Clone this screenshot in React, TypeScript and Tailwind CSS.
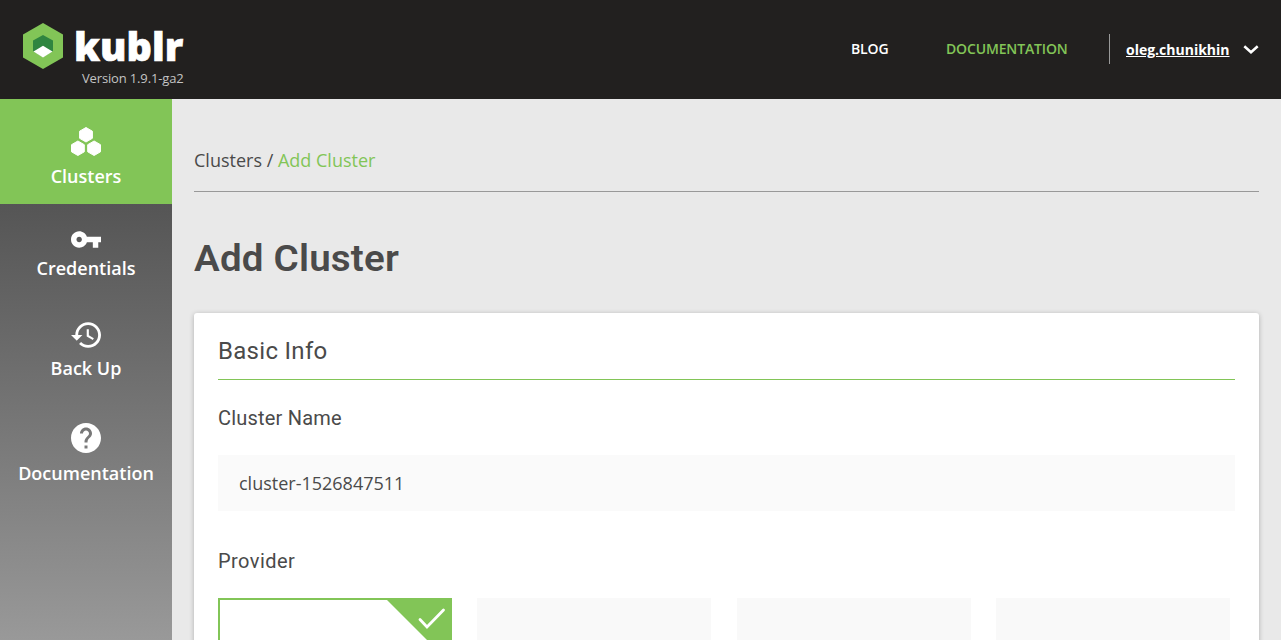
import React from "react";

const sans = "font-['Open_Sans',sans-serif]";
const display = "font-['Roboto',sans-serif]";

function Logo() {
  return (
    <div className="flex w-[190px] flex-col pl-[23px] pt-[23px]">
      <div className="flex h-[46px]">
        <svg width="40" height="46" viewBox="0 0 40 46" className="shrink-0">
          <path d="M20 0 40 11.5v23L20 46 0 34.500v-23z" fill="#82c557" />
          <path d="M20 12 30 17.500v10.500L20 34 10 28V17.500z" fill="#2f8540" />
          <path d="M20 22.800 29.500 28.500 20 34.500 10.500 28.500z" fill="#fff" />
        </svg>
        <span className="ml-[11px] text-[39.5px] leading-[46px] font-extrabold text-white [-webkit-text-stroke:0.7px_white]">kublr</span>
      </div>
      <span className="ml-[59px] mt-px whitespace-nowrap text-[13px] leading-4 tracking-[-0.15px] text-[#c4c4c4]">Version 1.9.1-ga2</span>
    </div>
  );
}

function Header() {
  return (
    <header className="flex h-[99px] shrink-0 bg-[#22201f]">
      <Logo />
      <nav className="ml-auto flex h-[98px] items-center pr-[22px] text-[14px] font-semibold">
        <a className="w-[95px] pb-0.5 tracking-[-0.15px] text-white">BLOG</a>
        <a className="w-[163px] pb-0.5 tracking-[-0.15px] text-[#82c557]">DOCUMENTATION</a>
        <div className="flex h-[30px] w-[150px] items-center border-l border-[#999] pl-4">
          <span className="text-[14px] font-bold text-white underline">oleg.chunikhin</span>
          <svg width="16" height="9" viewBox="0 0 16 9" className="ml-auto" fill="none" stroke="#fff" strokeWidth="2.500">
            <path d="m1.300 1.300 6.700 6 6.700-6" />
          </svg>
        </div>
      </nav>
    </header>
  );
}

function ClustersIcon() {
  return (
    <svg width="30" height="29" viewBox="0 0 30 29" fill="#fff" stroke="#fff" strokeWidth="1" strokeLinejoin="round">
      <path d="m15 .5 6.400 3.700v7.100L15 15l-6.400-3.700V4.200z" />
      <path d="m6.900 14 6.400 3.700v7.100l-6.400 3.700-6.400-3.700v-7.100z" />
      <path d="m23.100 14 6.400 3.700v7.100l-6.400 3.700-6.400-3.700v-7.100z" />
    </svg>
  );
}

function KeyIcon() {
  return (
    <svg width="30" height="17" viewBox="1 6 22 12" fill="#fff">
      <path d="M12.650 10C11.830 7.670 9.610 6 7 6c-3.310 0-6 2.690-6 6s2.690 6 6 6c2.610 0 4.830-1.670 5.650-4H17v4h4v-4h2v-4H12.650zM7 14c-1.100 0-2-.9-2-2s.9-2 2-2 2 .9 2 2-.9 2-2 2z" />
    </svg>
  );
}

function HistoryIcon() {
  return (
    <svg width="30" height="26" viewBox="1 3 21 18" fill="#fff">
      <path d="M13 3c-4.970 0-9 4.030-9 9H1l3.890 3.890.07.14L9 12H6c0-3.870 3.130-7 7-7s7 3.130 7 7-3.130 7-7 7c-1.930 0-3.680-.79-4.940-2.060l-1.420 1.420C8.270 19.990 10.510 21 13 21c4.970 0 9-4.030 9-9s-4.030-9-9-9zm-1 5v5l4.280 2.540.72-1.210-3.500-2.080V8H12z" />
    </svg>
  );
}

function HelpIcon() {
  return (
    <svg width="30" height="30" viewBox="2 2 20 20" fill="#fff">
      <path d="M12 2C6.480 2 2 6.480 2 12s4.480 10 10 10 10-4.480 10-10S17.520 2 12 2zm1 17h-2v-2h2v2zm2.070-7.750-.9.920C13.450 12.900 13 13.500 13 15h-2v-.5c0-1.100.45-2.100 1.170-2.830l1.240-1.260c.37-.36.59-.86.59-1.410 0-1.100-.9-2-2-2s-2 .9-2 2H8c0-2.210 1.790-4 4-4s4 1.790 4 4c0 .88-.36 1.680-.93 2.250z" />
    </svg>
  );
}

function Sidebar() {
  const item = "flex flex-col items-center text-[18px] leading-6 font-semibold text-white";
  return (
    <aside className="flex w-[172px] shrink-0 flex-col bg-gradient-to-b from-[#464646] to-[#999]">
      <a className={`${item} h-[105px] bg-[#82c557] pt-7`}>
        <ClustersIcon />
        <span className="mt-2">Clusters</span>
      </a>
      <a className={`${item} h-[92px] pt-[27px]`}>
        <KeyIcon />
        <span className="mt-2">Credentials</span>
      </a>
      <a className={`${item} h-[102px] pt-[26px]`}>
        <HistoryIcon />
        <span className="mt-2">Back Up</span>
      </a>
      <a className={`${item} pt-[25px]`}>
        <HelpIcon />
        <span className="mt-2">Documentation</span>
      </a>
    </aside>
  );
}

function Providers() {
  return (
    <div className="mt-[23px] flex gap-[25.3px]">
      <div className="flex h-[120px] w-[234px] shrink-0 justify-end border-2 border-[#82c557] bg-white">
        <svg width="63" height="63" viewBox="0 0 63 63">
          <path d="M0 0h63v63z" fill="#82c557" />
          <path d="m33 19.500 7 7.500 16.500-17" fill="none" stroke="#fff" strokeWidth="2.800" strokeLinecap="round" />
        </svg>
      </div>
      <div className="h-[120px] w-[234px] shrink-0 bg-[#f9f9f9]" />
      <div className="h-[120px] w-[234px] shrink-0 bg-[#f9f9f9]" />
      <div className="h-[120px] w-[234px] shrink-0 bg-[#f9f9f9]" />
    </div>
  );
}

export default function App() {
  return (
    <div className={`flex h-[640px] w-full flex-col overflow-hidden bg-[#e9e9e9] text-[#4a4a4a] ${sans}`}>
      <Header />
      <div className="flex min-h-0 flex-1">
        <Sidebar />
        <main className="min-w-0 flex-1 overflow-hidden px-[22px]">
          <div className="h-[93px] border-b border-[#999] pt-[49px] text-[18px] leading-6">
            Clusters / <span className="text-[#82c557]">Add Cluster</span>
          </div>
          <h1 className={`w-fit origin-left scale-x-[1.07] pt-[43px] text-[36px] leading-[48px] font-semibold tracking-[0.2px] ${display}`}>Add Cluster</h1>
          <section className="mt-[30px] h-[500px] rounded-[3px] bg-white px-6 shadow-[0_1px_5px_rgba(0,0,0,0.25)]">
            <h2 className={`h-[67px] border-b border-[#82c557] pt-[22px] text-[24px] leading-8 tracking-[0.3px] ${display}`}>Basic Info</h2>
            <h3 className={`pt-[24px] text-[20px] leading-7 tracking-[0.2px] ${display}`}>Cluster Name</h3>
            <div className="mt-[23px] flex h-14 items-center bg-[#fafafa] pl-[21px] text-[18px]">cluster-1526847511</div>
            <h3 className={`pt-[36px] text-[20px] leading-7 tracking-[0.45px] ${display}`}>Provider</h3>
            <Providers />
          </section>
        </main>
      </div>
    </div>
  );
}
